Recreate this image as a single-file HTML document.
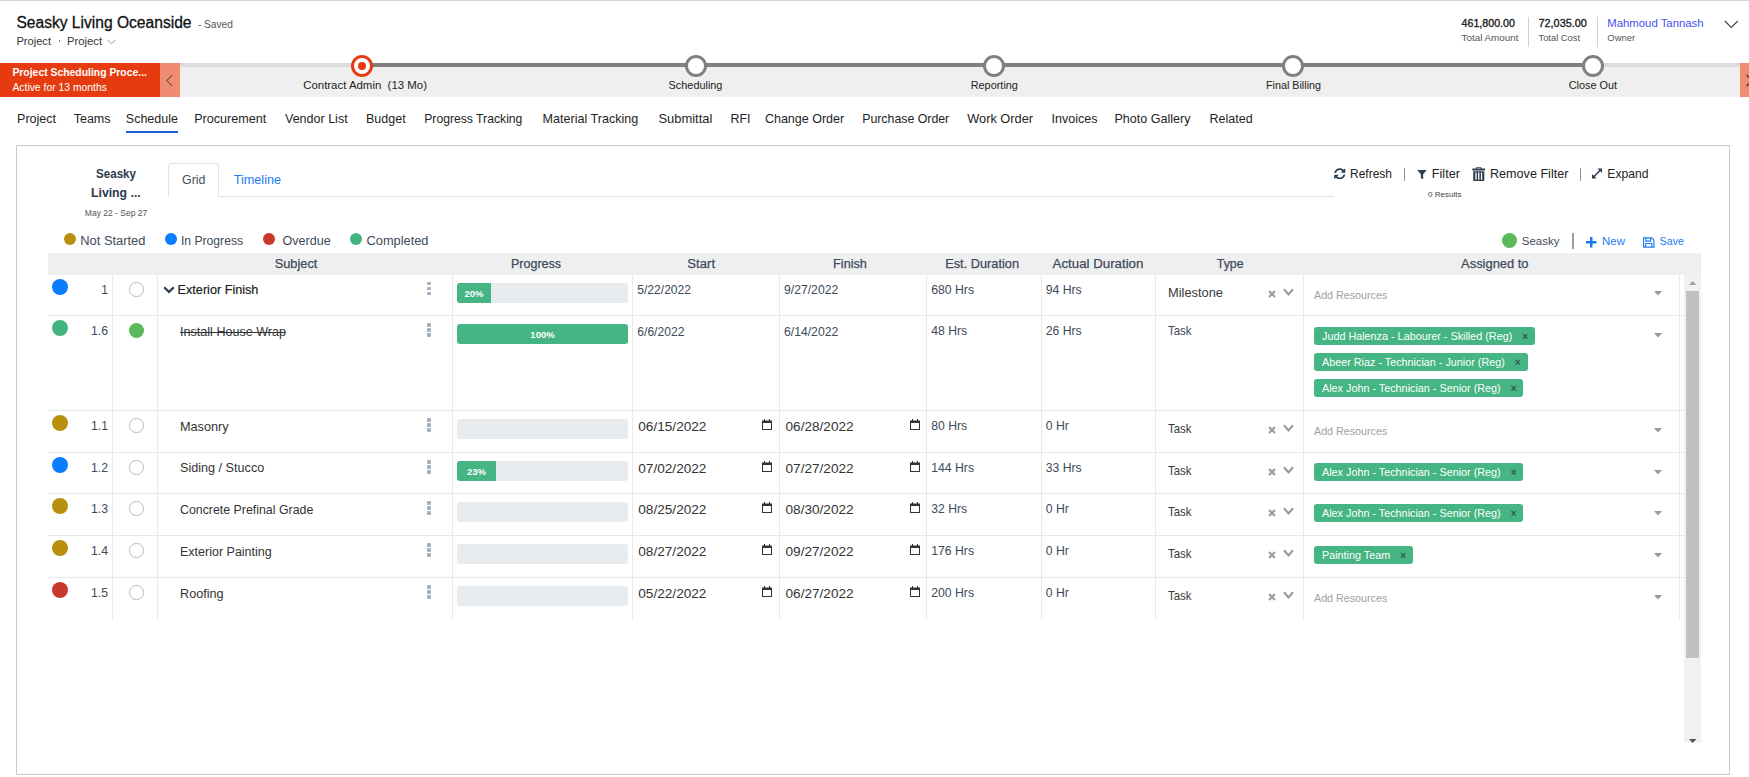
<!DOCTYPE html><html><head><meta charset="utf-8"><style>
*{margin:0;padding:0;box-sizing:content-box}
html,body{width:1749px;height:777px;overflow:hidden;background:#fff;position:relative;font-family:"Liberation Sans",sans-serif}
.t{position:absolute;white-space:nowrap;line-height:1}
.r{position:absolute}
.tag{position:absolute;height:18px;line-height:18px;background:#45b583;color:#fff;font-size:10.8px;padding:0 7px 0 8px;border-radius:3px;white-space:nowrap}
.tag .x{color:#2f5a45;font-size:10px;margin-left:10px;font-weight:700}
</style></head><body><div class="r" style="left:0px;top:0px;width:1749px;height:1px;background:#d6d6d6;"></div>
<div class="t" style="left: 16.4px; top: 15.01px; font-size: 15.6px; color: rgb(17, 17, 17); font-weight: 400; -webkit-text-stroke: 0.3px rgb(17, 17, 17);">Seasky Living Oceanside</div>
<div class="t" style="left: 197.9px; top: 20.01px; font-size: 10.16px; color: rgb(85, 85, 85); font-weight: 400;">- Saved</div>
<div class="t" style="left: 16.4px; top: 36.01px; font-size: 11.12px; color: rgb(51, 51, 51); font-weight: 400;">Project</div>
<div class="r" style="left:58.6px;top:40.3px;width:1.6px;height:1.6px;background:#666;border-radius:50%"></div>
<div class="t" style="left: 67px; top: 36.01px; font-size: 11.25px; color: rgb(51, 51, 51); font-weight: 400;">Project</div>
<svg class="r" style="left:106.5px;top:38.5px" width="9" height="6" viewBox="0 0 9 6"><path d="M0.5 0.8 L4.5 4.8 L8.5 0.8" fill="none" stroke="#888" stroke-width="0.9"></path></svg>
<div class="t" style="left: 1461.6px; top: 17.72px; font-size: 10.67px; color: rgb(34, 34, 34); font-weight: 400; -webkit-text-stroke: 0.35px rgb(34, 34, 34);">461,800.00</div>
<div class="t" style="left: 1461.6px; top: 33.01px; font-size: 9.83px; color: rgb(85, 85, 85); font-weight: 400;">Total Amount</div>
<div class="r" style="left:1528px;top:17px;width:1px;height:30px;background:#d0d0d0;"></div>
<div class="t" style="left: 1538.5px; top: 17.72px; font-size: 10.87px; color: rgb(34, 34, 34); font-weight: 400; -webkit-text-stroke: 0.35px rgb(34, 34, 34);">72,035.00</div>
<div class="t" style="left: 1538.5px; top: 34.01px; font-size: 9.34px; color: rgb(85, 85, 85); font-weight: 400;">Total Cost</div>
<div class="r" style="left:1597px;top:17px;width:1px;height:30px;background:#d0d0d0;"></div>
<div class="t" style="left: 1607.3px; top: 17.9px; font-size: 11.35px; color: rgb(70, 80, 240); font-weight: 400;">Mahmoud Tannash</div>
<div class="t" style="left: 1607.3px; top: 33.01px; font-size: 9.43px; color: rgb(85, 85, 85); font-weight: 400;">Owner</div>
<svg class="r" style="left:1724px;top:19.5px" width="15" height="9" viewBox="0 0 15 9"><path d="M0.8 1 L7.3 7.5 L13.8 1" fill="none" stroke="#444" stroke-width="1.1"></path></svg>
<div class="r" style="left:0px;top:63px;width:1749px;height:34px;background:#efefef;"></div>
<div class="r" style="left:180px;top:63px;width:182px;height:4px;background:#dcdcdc;"></div>
<div class="r" style="left:362px;top:63px;width:1231px;height:4px;background:#808080;"></div>
<div class="r" style="left:1593px;top:63px;width:147px;height:4px;background:#dcdcdc;"></div>
<div class="r" style="left:0px;top:63px;width:160px;height:34px;background:#e63b10;"></div>
<div class="r" style="left:160px;top:63px;width:20px;height:34px;background:#f08c72;"></div>
<div class="r" style="left:1740px;top:63px;width:9px;height:34px;background:#f08c72;"></div>
<svg class="r" style="left:1746px;top:74px" width="3" height="13" viewBox="0 0 3 13"><path d="M0.8 1 L6 6.5 L0.8 12" fill="none" stroke="#333" stroke-width="1.1"></path></svg>
<div class="t" style="left: 12.4px; top: 67.91px; font-size: 10.4px; color: rgb(255, 255, 255); font-weight: 700;">Project Scheduling Proce...</div>
<div class="t" style="left: 12.4px; top: 83.01px; font-size: 10.39px; color: rgb(255, 255, 255); font-weight: 400;">Active for 13 months</div>
<svg class="r" style="left:165px;top:74px" width="9" height="13" viewBox="0 0 9 13"><path d="M7.3 1 L1.8 6.5 L7.3 12" fill="none" stroke="#1f2a44" stroke-width="0.9"></path></svg>
<div class="r" style="left:351px;top:54.5px;width:16px;height:16px;border:3px solid #e63b10;border-radius:50%;background:#fff"></div>
<div class="r" style="left:358px;top:61.5px;width:8px;height:8px;border-radius:50%;background:#e63b10"></div>
<div class="r" style="left:685px;top:54.5px;width:16px;height:16px;border:3px solid #808080;border-radius:50%;background:#fff"></div>
<div class="r" style="left:983px;top:54.5px;width:16px;height:16px;border:3px solid #808080;border-radius:50%;background:#fff"></div>
<div class="r" style="left:1282px;top:54.5px;width:16px;height:16px;border:3px solid #808080;border-radius:50%;background:#fff"></div>
<div class="r" style="left:1582px;top:54.5px;width:16px;height:16px;border:3px solid #808080;border-radius:50%;background:#fff"></div>
<div class="t" style="left: 303.2px; top: 79.81px; font-size: 11.43px; color: rgb(34, 34, 34); font-weight: 400;">Contract Admin &nbsp;(13 Mo)</div>
<div class="t" style="left: 695.5px; transform: translateX(-50%); top: 79.81px; font-size: 10.88px; color: rgb(34, 34, 34); font-weight: 400;">Scheduling</div>
<div class="t" style="left: 994.3px; transform: translateX(-50%); top: 79.81px; font-size: 10.92px; color: rgb(34, 34, 34); font-weight: 400;">Reporting</div>
<div class="t" style="left: 1293.5px; transform: translateX(-50%); top: 79.81px; font-size: 10.76px; color: rgb(34, 34, 34); font-weight: 400;">Final Billing</div>
<div class="t" style="left: 1592.9px; transform: translateX(-50%); top: 79.81px; font-size: 10.85px; color: rgb(34, 34, 34); font-weight: 400;">Close Out</div>
<div class="t" style="left: 17.1px; top: 113.21px; font-size: 12.5px; color: rgb(36, 36, 36); font-weight: 400;">Project</div>
<div class="t" style="left: 73.7px; top: 113.21px; font-size: 12.5px; color: rgb(36, 36, 36); font-weight: 400;">Teams</div>
<div class="t" style="left: 125.8px; top: 113.21px; font-size: 12.5px; color: rgb(36, 36, 36); font-weight: 400;">Schedule</div>
<div class="t" style="left: 194.2px; top: 113.21px; font-size: 12.59px; color: rgb(36, 36, 36); font-weight: 400;">Procurement</div>
<div class="t" style="left: 285px; top: 113.21px; font-size: 12.53px; color: rgb(36, 36, 36); font-weight: 400;">Vendor List</div>
<div class="t" style="left: 366px; top: 113.21px; font-size: 12.5px; color: rgb(36, 36, 36); font-weight: 400;">Budget</div>
<div class="t" style="left: 424.2px; top: 113.21px; font-size: 12.2px; color: rgb(36, 36, 36); font-weight: 400;">Progress Tracking</div>
<div class="t" style="left: 542.6px; top: 113.21px; font-size: 12.58px; color: rgb(36, 36, 36); font-weight: 400;">Material Tracking</div>
<div class="t" style="left: 658.4px; top: 113.21px; font-size: 12.95px; color: rgb(36, 36, 36); font-weight: 400;">Submittal</div>
<div class="t" style="left: 730.4px; top: 113.21px; font-size: 12.5px; color: rgb(36, 36, 36); font-weight: 400;">RFI</div>
<div class="t" style="left: 764.9px; top: 113.21px; font-size: 12.52px; color: rgb(36, 36, 36); font-weight: 400;">Change Order</div>
<div class="t" style="left: 862.2px; top: 113.21px; font-size: 12.33px; color: rgb(36, 36, 36); font-weight: 400;">Purchase Order</div>
<div class="t" style="left: 967.2px; top: 113.21px; font-size: 12.79px; color: rgb(36, 36, 36); font-weight: 400;">Work Order</div>
<div class="t" style="left: 1051.6px; top: 113.21px; font-size: 12.5px; color: rgb(36, 36, 36); font-weight: 400;">Invoices</div>
<div class="t" style="left: 1114.4px; top: 113.21px; font-size: 12.57px; color: rgb(36, 36, 36); font-weight: 400;">Photo Gallery</div>
<div class="t" style="left: 1209.6px; top: 113.21px; font-size: 12.5px; color: rgb(36, 36, 36); font-weight: 400;">Related</div>
<div class="r" style="left:126px;top:131px;width:52px;height:2px;background:#1a5fd6;"></div>
<div class="r" style="left:16px;top:145px;width:1712px;height:628px;border:1px solid #c8c8c8"></div>
<div class="t" style="left: 96px; top: 167px; font-size: 13.2px; color: rgb(44, 58, 75); font-weight: 700; transform: scaleX(0.8797); transform-origin: left center;">Seasky</div>
<div class="t" style="left: 91.2px; top: 186px; font-size: 13.2px; color: rgb(44, 58, 75); font-weight: 700; transform: scaleX(0.9292); transform-origin: left center;">Living ...</div>
<div class="t" style="left: 84.8px; top: 208.61px; font-size: 8.52px; color: rgb(85, 85, 85); font-weight: 400;">May 22 - Sep 27</div>
<div class="r" style="left:219px;top:196px;width:1115px;height:1px;background:#dee2e6;"></div>
<div class="r" style="left:168px;top:163px;width:49px;height:33px;border:1px solid #dee2e6;border-bottom:none;border-radius:4px 4px 0 0;background:#fff"></div>
<div class="t" style="left: 182px; top: 174.41px; font-size: 12.4px; color: rgb(73, 80, 87); font-weight: 400;">Grid</div>
<div class="t" style="left: 233.7px; top: 174.41px; font-size: 12.66px; color: rgb(26, 124, 240); font-weight: 400;">Timeline</div>
<svg class="r" style="left:1334px;top:167.5px" width="11.5" height="11.5" viewBox="0 0 512 512"><path fill="#2c3e50" d="M370.7 133.3C339.5 104 298.9 88 255.8 88c-77.5.1-144.3 53.2-162.8 126.9-1.3 5.4-6.1 9.2-11.7 9.2H24.1c-7.5 0-13.2-6.8-11.8-14.2C33.9 94.9 134.8 8 256 8c66.4 0 126.8 26.1 171.3 68.7L463 41c15.1-15.1 41-4.4 41 17v134c0 13.3-10.7 24-24 24H346c-21.4 0-32.1-25.9-17-41zM32 296h134c21.4 0 32.1 25.9 17 41l-41.8 41.8c31.3 29.3 71.8 45.3 114.9 45.2 77.4-.1 144.3-53.1 162.8-126.8 1.3-5.4 6.1-9.2 11.7-9.2h57.3c7.5 0 13.2 6.8 11.8 14.2C478.1 417.1 377.2 504 256 504c-66.4 0-126.8-26.1-171.3-68.7L49 471c-15.1 15.1-41 4.4-41-17V320c0-13.3 10.7-24 24-24z"></path></svg>
<div class="t" style="left: 1350px; top: 168.01px; font-size: 11.99px; color: rgb(34, 34, 34); font-weight: 400;">Refresh</div>
<div class="r" style="left:1403.5px;top:168px;width:1.3px;height:13px;background:#8a939c;"></div>
<svg class="r" style="left:1417px;top:169.5px" width="10" height="9.5" viewBox="0 0 10 10"><path fill="#2c3e50" d="M0 0 H10 L6.2 4.5 V10 L3.8 8.5 V4.5 Z"></path></svg>
<div class="t" style="left: 1431.8px; top: 168px; font-size: 12.69px; color: rgb(34, 34, 34); font-weight: 400;">Filter</div>
<svg class="r" style="left:1471.7px;top:166.8px" width="13.5" height="14.2" viewBox="0 0 13.5 14.2"><path fill="#2c3e50" d="M4.3 0.3 H9.2 L9.8 1.6 H13.2 V3.4 H0.3 V1.6 H3.7 Z M1.2 4.2 H12.3 V13 Q12.3 14.2 11.1 14.2 H2.4 Q1.2 14.2 1.2 13 Z"></path><path fill="#fff" d="M5.2 1 H8.3 L8.6 1.6 H4.9Z M3.3 5.6 H4.6 V12.8 H3.3Z M6.1 5.6 H7.4 V12.8 H6.1Z M8.9 5.6 H10.2 V12.8 H8.9Z"></path></svg>
<div class="t" style="left: 1490px; top: 168px; font-size: 12.6px; color: rgb(34, 34, 34); font-weight: 400;">Remove Filter</div>
<div class="r" style="left:1579.5px;top:168px;width:1.3px;height:13px;background:#8a939c;"></div>
<svg class="r" style="left:1591px;top:167.5px" width="12" height="11" viewBox="0 0 12 12"><path fill="none" stroke="#2c3e50" stroke-width="1.6" d="M2.5 9.5 L9.5 2.5"></path><path fill="#2c3e50" d="M6.5 0.5 H11.5 V5.5 Z M0.5 6.5 V11.5 H5.5 Z"></path></svg>
<div class="t" style="left: 1607.3px; top: 168px; font-size: 12.15px; color: rgb(34, 34, 34); font-weight: 400;">Expand</div>
<div class="t" style="left: 1428px; top: 190.8px; font-size: 8.06px; color: rgb(68, 68, 68); font-weight: 400;">0 Results</div>
<div class="r" style="left:63.5px;top:233px;width:12px;height:12px;background:#b8900e;border-radius:50%"></div>
<div class="t" style="left: 80.3px; top: 234.91px; font-size: 12.89px; color: rgb(61, 74, 90); font-weight: 400;">Not Started</div>
<div class="r" style="left:164.6px;top:233px;width:12px;height:12px;background:#0a7cff;border-radius:50%"></div>
<div class="t" style="left: 180.9px; top: 234.91px; font-size: 12.17px; color: rgb(61, 74, 90); font-weight: 400;">In Progress</div>
<div class="r" style="left:263.1px;top:233px;width:12px;height:12px;background:#c9392b;border-radius:50%"></div>
<div class="t" style="left: 282.5px; top: 234.91px; font-size: 12.55px; color: rgb(61, 74, 90); font-weight: 400;">Overdue</div>
<div class="r" style="left:349.8px;top:233px;width:12px;height:12px;background:#43b47f;border-radius:50%"></div>
<div class="t" style="left: 366.6px; top: 234.91px; font-size: 12.8px; color: rgb(61, 74, 90); font-weight: 400;">Completed</div>
<div class="r" style="left:1502px;top:233px;width:15px;height:15px;background:#5cb85c;border-radius:50%"></div>
<div class="t" style="left: 1521.8px; top: 235.6px; font-size: 11.46px; color: rgb(61, 74, 90); font-weight: 400;">Seasky</div>
<div class="r" style="left:1572px;top:233px;width:2px;height:16px;background:#9aa0a6;"></div>
<svg class="r" style="left:1586px;top:237px" width="10.5" height="10.5" viewBox="0 0 11 11"><path fill="#1a7cf0" d="M4.2 0 H6.8 V4.2 H11 V6.8 H6.8 V11 H4.2 V6.8 H0 V4.2 H4.2 Z"></path></svg>
<div class="t" style="left: 1602px; top: 235.6px; font-size: 11.49px; color: rgb(26, 124, 240); font-weight: 400;">New</div>
<svg class="r" style="left:1643px;top:237px" width="11.5" height="11" viewBox="0 0 12 11"><path fill="none" stroke="#1a7cf0" stroke-width="1.2" d="M0.6 0.6 H9 L11.4 3 V10.4 H0.6 Z M3 0.6 V4 H8 V0.6 M2.8 10.4 V6.5 H9.2 V10.4"></path></svg>
<div class="t" style="left: 1659.6px; top: 235.6px; font-size: 10.67px; color: rgb(26, 124, 240); font-weight: 400;">Save</div>
<div class="r" style="left:48px;top:253px;width:1653px;height:22px;background:#efefef;"></div>
<div class="t" style="left: 296px; transform: translateX(-50%); top: 258.41px; font-size: 12.81px; color: rgb(61, 74, 90); font-weight: 400; -webkit-text-stroke: 0.25px rgb(61, 74, 90);">Subject</div>
<div class="t" style="left: 536px; transform: translateX(-50%); top: 258.41px; font-size: 12.49px; color: rgb(61, 74, 90); font-weight: 400; -webkit-text-stroke: 0.25px rgb(61, 74, 90);">Progress</div>
<div class="t" style="left: 701.2px; transform: translateX(-50%); top: 257.41px; font-size: 13.12px; color: rgb(61, 74, 90); font-weight: 400; -webkit-text-stroke: 0.25px rgb(61, 74, 90);">Start</div>
<div class="t" style="left: 850px; transform: translateX(-50%); top: 258.41px; font-size: 12.68px; color: rgb(61, 74, 90); font-weight: 400; -webkit-text-stroke: 0.25px rgb(61, 74, 90);">Finish</div>
<div class="t" style="left: 982.1px; transform: translateX(-50%); top: 258.41px; font-size: 12.77px; color: rgb(61, 74, 90); font-weight: 400; -webkit-text-stroke: 0.25px rgb(61, 74, 90);">Est. Duration</div>
<div class="t" style="left: 1098px; transform: translateX(-50%); top: 257.41px; font-size: 13.29px; color: rgb(61, 74, 90); font-weight: 400; -webkit-text-stroke: 0.25px rgb(61, 74, 90);">Actual Duration</div>
<div class="t" style="left: 1230.2px; transform: translateX(-50%); top: 258.41px; font-size: 12.31px; color: rgb(61, 74, 90); font-weight: 400; -webkit-text-stroke: 0.25px rgb(61, 74, 90);">Type</div>
<div class="t" style="left: 1494.8px; transform: translateX(-50%); top: 258.41px; font-size: 12.92px; color: rgb(61, 74, 90); font-weight: 400; -webkit-text-stroke: 0.25px rgb(61, 74, 90);">Assigned to</div>
<div class="r" style="left:48px;top:315px;width:1636px;height:1px;background:#e9e9e9;"></div>
<div class="r" style="left:48px;top:410px;width:1636px;height:1px;background:#e9e9e9;"></div>
<div class="r" style="left:48px;top:452px;width:1636px;height:1px;background:#e9e9e9;"></div>
<div class="r" style="left:48px;top:493px;width:1636px;height:1px;background:#e9e9e9;"></div>
<div class="r" style="left:48px;top:535px;width:1636px;height:1px;background:#e9e9e9;"></div>
<div class="r" style="left:48px;top:577px;width:1636px;height:1px;background:#e9e9e9;"></div>
<div class="r" style="left:112px;top:275px;width:1px;height:344px;background:#e9e9e9;"></div>
<div class="r" style="left:157px;top:275px;width:1px;height:344px;background:#e9e9e9;"></div>
<div class="r" style="left:452px;top:275px;width:1px;height:344px;background:#e9e9e9;"></div>
<div class="r" style="left:632px;top:275px;width:1px;height:344px;background:#e9e9e9;"></div>
<div class="r" style="left:779px;top:275px;width:1px;height:344px;background:#e9e9e9;"></div>
<div class="r" style="left:926px;top:275px;width:1px;height:344px;background:#e9e9e9;"></div>
<div class="r" style="left:1041px;top:275px;width:1px;height:344px;background:#e9e9e9;"></div>
<div class="r" style="left:1155px;top:275px;width:1px;height:344px;background:#e9e9e9;"></div>
<div class="r" style="left:1303px;top:275px;width:1px;height:344px;background:#e9e9e9;"></div>
<div class="r" style="left:1679px;top:275px;width:1px;height:344px;background:#e9e9e9;"></div>
<div class="r" style="left:1684px;top:275px;width:17px;height:468px;background:#f1f1f1;"></div>
<div class="r" style="left:1686px;top:291px;width:13px;height:367px;background:#c1c1c1;"></div>
<svg class="r" style="left:1688.8px;top:281px" width="7.2" height="4" viewBox="0 0 7.2 4"><path fill="#a3a3a3" d="M0 4 L3.6 0 L7.2 4Z"></path></svg>
<svg class="r" style="left:1688.8px;top:738.5px" width="7.2" height="4" viewBox="0 0 7.2 4"><path fill="#505050" d="M0 0 L3.6 4 L7.2 0Z"></path></svg>
<div class="r" style="left:52px;top:279px;width:16px;height:16px;background:#0a7cff;border-radius:50%"></div>
<div class="t" style="right: 1641px; top: 284.01px; font-size: 12.2px; color: rgb(61, 74, 90); font-weight: 400;">1</div>
<div class="r" style="left:129.3px;top:282px;width:12.5px;height:12.5px;border:1px solid #b4bcc4;border-radius:50%"></div>
<svg class="r" style="left:163px;top:286px" width="12" height="8" viewBox="0 0 12 8"><path d="M1.2 1.2 L6 6 L10.8 1.2" fill="none" stroke="#2c3a4b" stroke-width="2.2"></path></svg>
<div class="t" style="left: 177.6px; top: 284px; font-size: 12.65px; color: rgb(34, 34, 34); font-weight: 400; -webkit-text-stroke: 0.2px rgb(34, 34, 34);">Exterior Finish</div>
<div class="r" style="left:427.3px;top:281.5px;width:3.8px;height:3.5px;background:#a3b0bd;border-radius:1px"></div>
<div class="r" style="left:427.3px;top:286.5px;width:3.8px;height:3.5px;background:#a3b0bd;border-radius:1px"></div>
<div class="r" style="left:427.3px;top:291.5px;width:3.8px;height:3.5px;background:#a3b0bd;border-radius:1px"></div>
<div class="r" style="left:457px;top:283px;width:171px;height:20px;background:#e9ecef;border-radius:3px"></div>
<div class="r" style="left:457px;top:283px;width:34px;height:20px;background:#45b583;border-radius:3px 0 0 3px;color:#fff;font-weight:700;font-size:9.5px;line-height:21px;text-align:center;font-family:'Liberation Sans',sans-serif">20%</div>
<div class="t" style="left: 637.3px; top: 284px; font-size: 12.07px; color: rgb(61, 74, 90); font-weight: 400;">5/22/2022</div>
<div class="t" style="left: 784px; top: 284px; font-size: 12.19px; color: rgb(61, 74, 90); font-weight: 400;">9/27/2022</div>
<div class="t" style="left: 931.3px; top: 284.01px; font-size: 12.2px; color: rgb(61, 74, 90); font-weight: 400;">680 Hrs</div>
<div class="t" style="left: 1045.8px; top: 284.01px; font-size: 12.2px; color: rgb(61, 74, 90); font-weight: 400;">94 Hrs</div>
<div class="t" style="left: 1168px; top: 287px; font-size: 12.4px; color: rgb(58, 58, 58); font-weight: 400; transform: scaleX(1.0352); transform-origin: left center;">Milestone</div>
<svg class="r" style="left:1268px;top:290px" width="8" height="8" viewBox="0 0 8 8"><path d="M1 1 L7 7 M7 1 L1 7" stroke="#999" stroke-width="2"></path></svg>
<svg class="r" style="left:1283px;top:287.5px" width="11" height="9" viewBox="0 0 11 9"><path d="M1 1.2 L5.5 6.5 L10 1.2" fill="none" stroke="#999" stroke-width="2.1"></path></svg>
<div class="t" style="left: 1314px; top: 290.31px; font-size: 10.72px; color: rgb(160, 160, 160); font-weight: 400;">Add Resources</div>
<svg class="r" style="left:1654px;top:291px" width="8" height="4.5" viewBox="0 0 8 4.5"><path fill="#999" d="M0 0 L8 0 L4 4.5Z"></path></svg>
<div class="r" style="left:52px;top:320px;width:16px;height:16px;background:#43b47f;border-radius:50%"></div>
<div class="t" style="right: 1641px; top: 325.01px; font-size: 12.2px; color: rgb(61, 74, 90); font-weight: 400;">1.6</div>
<div class="r" style="left:128.8px;top:323px;width:15px;height:15px;background:#5cb85c;border-radius:50%"></div>
<div class="t" style="left: 180.1px; top: 326px; font-size: 12.57px; color: rgb(51, 51, 51); font-weight: 400; text-decoration: line-through;">Install House Wrap</div>
<div class="r" style="left:427.3px;top:323.3px;width:3.8px;height:3.5px;background:#a3b0bd;border-radius:1px"></div>
<div class="r" style="left:427.3px;top:328.3px;width:3.8px;height:3.5px;background:#a3b0bd;border-radius:1px"></div>
<div class="r" style="left:427.3px;top:333.3px;width:3.8px;height:3.5px;background:#a3b0bd;border-radius:1px"></div>
<div class="r" style="left:457px;top:324px;width:171px;height:20px;background:#e9ecef;border-radius:3px"></div>
<div class="r" style="left:457px;top:324px;width:171px;height:20px;background:#45b583;border-radius:3px;color:#fff;font-weight:700;font-size:9.5px;line-height:21px;text-align:center;font-family:'Liberation Sans',sans-serif">100%</div>
<div class="t" style="left: 637.3px; top: 326px; font-size: 12.1px; color: rgb(61, 74, 90); font-weight: 400;">6/6/2022</div>
<div class="t" style="left: 784px; top: 326px; font-size: 12.19px; color: rgb(61, 74, 90); font-weight: 400;">6/14/2022</div>
<div class="t" style="left: 931.3px; top: 325.01px; font-size: 12.2px; color: rgb(61, 74, 90); font-weight: 400;">48 Hrs</div>
<div class="t" style="left: 1045.8px; top: 325.01px; font-size: 12.2px; color: rgb(61, 74, 90); font-weight: 400;">26 Hrs</div>
<div class="t" style="left: 1168px; top: 325px; font-size: 12.4px; color: rgb(61, 74, 90); font-weight: 400; transform: scaleX(0.9221); transform-origin: left center;">Task</div>
<div class="tag" style="left:1314px;top:327.0px">Judd Halenza - Labourer - Skilled (Reg)<span class="x">×</span></div>
<div class="tag" style="left:1314px;top:353.1px">Abeer Riaz - Technician - Junior (Reg)<span class="x">×</span></div>
<div class="tag" style="left:1314px;top:379.2px">Alex John - Technician - Senior (Reg)<span class="x">×</span></div>
<svg class="r" style="left:1654px;top:333px" width="8" height="4.5" viewBox="0 0 8 4.5"><path fill="#999" d="M0 0 L8 0 L4 4.5Z"></path></svg>
<div class="r" style="left:52px;top:415px;width:16px;height:16px;background:#b8900e;border-radius:50%"></div>
<div class="t" style="right: 1641px; top: 420.01px; font-size: 12.2px; color: rgb(61, 74, 90); font-weight: 400;">1.1</div>
<div class="r" style="left:129.3px;top:418px;width:12.5px;height:12.5px;border:1px solid #b4bcc4;border-radius:50%"></div>
<div class="t" style="left: 180px; top: 421px; font-size: 12.69px; color: rgb(51, 51, 51); font-weight: 400;">Masonry</div>
<div class="r" style="left:427.3px;top:418.3px;width:3.8px;height:3.5px;background:#a3b0bd;border-radius:1px"></div>
<div class="r" style="left:427.3px;top:423.3px;width:3.8px;height:3.5px;background:#a3b0bd;border-radius:1px"></div>
<div class="r" style="left:427.3px;top:428.3px;width:3.8px;height:3.5px;background:#a3b0bd;border-radius:1px"></div>
<div class="r" style="left:457px;top:419px;width:171px;height:20px;background:#e9ecef;border-radius:3px"></div>
<div class="t" style="left: 638.3px; top: 420.01px; font-size: 13.61px; color: rgb(51, 51, 51); font-weight: 400;">06/15/2022</div>
<div class="t" style="left: 785.5px; top: 420.01px; font-size: 13.61px; color: rgb(51, 51, 51); font-weight: 400;">06/28/2022</div>
<svg class="r" style="left:762px;top:419px" width="10" height="11" viewBox="0 0 10 11"><path fill="#333" d="M2 0 H3 V1.5 H7 V0 H8 V1.5 H10 V11 H0 V1.5 H2 Z M1 4 V10 H9 V4 Z"></path></svg>
<svg class="r" style="left:909.5px;top:419px" width="10" height="11" viewBox="0 0 10 11"><path fill="#333" d="M2 0 H3 V1.5 H7 V0 H8 V1.5 H10 V11 H0 V1.5 H2 Z M1 4 V10 H9 V4 Z"></path></svg>
<div class="t" style="left: 931.3px; top: 420.01px; font-size: 12.2px; color: rgb(61, 74, 90); font-weight: 400;">80 Hrs</div>
<div class="t" style="left: 1045.8px; top: 420.01px; font-size: 12.2px; color: rgb(61, 74, 90); font-weight: 400;">0 Hr</div>
<div class="t" style="left: 1168px; top: 423px; font-size: 12.4px; color: rgb(58, 58, 58); font-weight: 400; transform: scaleX(0.9221); transform-origin: left center;">Task</div>
<svg class="r" style="left:1268px;top:426px" width="8" height="8" viewBox="0 0 8 8"><path d="M1 1 L7 7 M7 1 L1 7" stroke="#999" stroke-width="2"></path></svg>
<svg class="r" style="left:1283px;top:423.5px" width="11" height="9" viewBox="0 0 11 9"><path d="M1 1.2 L5.5 6.5 L10 1.2" fill="none" stroke="#999" stroke-width="2.1"></path></svg>
<div class="t" style="left: 1314px; top: 426.31px; font-size: 10.72px; color: rgb(160, 160, 160); font-weight: 400;">Add Resources</div>
<svg class="r" style="left:1654px;top:427.6px" width="8" height="4.5" viewBox="0 0 8 4.5"><path fill="#999" d="M0 0 L8 0 L4 4.5Z"></path></svg>
<div class="r" style="left:52px;top:457px;width:16px;height:16px;background:#0a7cff;border-radius:50%"></div>
<div class="t" style="right: 1641px; top: 462.01px; font-size: 12.2px; color: rgb(61, 74, 90); font-weight: 400;">1.2</div>
<div class="r" style="left:129.3px;top:460px;width:12.5px;height:12.5px;border:1px solid #b4bcc4;border-radius:50%"></div>
<div class="t" style="left: 180px; top: 462px; font-size: 12.63px; color: rgb(51, 51, 51); font-weight: 400;">Siding / Stucco</div>
<div class="r" style="left:427.3px;top:460.3px;width:3.8px;height:3.5px;background:#a3b0bd;border-radius:1px"></div>
<div class="r" style="left:427.3px;top:465.3px;width:3.8px;height:3.5px;background:#a3b0bd;border-radius:1px"></div>
<div class="r" style="left:427.3px;top:470.3px;width:3.8px;height:3.5px;background:#a3b0bd;border-radius:1px"></div>
<div class="r" style="left:457px;top:461px;width:171px;height:20px;background:#e9ecef;border-radius:3px"></div>
<div class="r" style="left:457px;top:461px;width:39px;height:20px;background:#45b583;border-radius:3px 0 0 3px;color:#fff;font-weight:700;font-size:9.5px;line-height:21px;text-align:center;font-family:'Liberation Sans',sans-serif">23%</div>
<div class="t" style="left: 638.3px; top: 462.01px; font-size: 13.61px; color: rgb(51, 51, 51); font-weight: 400;">07/02/2022</div>
<div class="t" style="left: 785.5px; top: 462.01px; font-size: 13.61px; color: rgb(51, 51, 51); font-weight: 400;">07/27/2022</div>
<svg class="r" style="left:762px;top:461px" width="10" height="11" viewBox="0 0 10 11"><path fill="#333" d="M2 0 H3 V1.5 H7 V0 H8 V1.5 H10 V11 H0 V1.5 H2 Z M1 4 V10 H9 V4 Z"></path></svg>
<svg class="r" style="left:909.5px;top:461px" width="10" height="11" viewBox="0 0 10 11"><path fill="#333" d="M2 0 H3 V1.5 H7 V0 H8 V1.5 H10 V11 H0 V1.5 H2 Z M1 4 V10 H9 V4 Z"></path></svg>
<div class="t" style="left: 931.3px; top: 462.01px; font-size: 12.2px; color: rgb(61, 74, 90); font-weight: 400;">144 Hrs</div>
<div class="t" style="left: 1045.8px; top: 462.01px; font-size: 12.2px; color: rgb(61, 74, 90); font-weight: 400;">33 Hrs</div>
<div class="t" style="left: 1168px; top: 465px; font-size: 12.4px; color: rgb(58, 58, 58); font-weight: 400; transform: scaleX(0.9221); transform-origin: left center;">Task</div>
<svg class="r" style="left:1268px;top:468px" width="8" height="8" viewBox="0 0 8 8"><path d="M1 1 L7 7 M7 1 L1 7" stroke="#999" stroke-width="2"></path></svg>
<svg class="r" style="left:1283px;top:465.5px" width="11" height="9" viewBox="0 0 11 9"><path d="M1 1.2 L5.5 6.5 L10 1.2" fill="none" stroke="#999" stroke-width="2.1"></path></svg>
<div class="tag" style="left:1314px;top:463px">Alex John - Technician - Senior (Reg)<span class="x">×</span></div>
<svg class="r" style="left:1654px;top:469.6px" width="8" height="4.5" viewBox="0 0 8 4.5"><path fill="#999" d="M0 0 L8 0 L4 4.5Z"></path></svg>
<div class="r" style="left:52px;top:498px;width:16px;height:16px;background:#b8900e;border-radius:50%"></div>
<div class="t" style="right: 1641px; top: 503.01px; font-size: 12.2px; color: rgb(61, 74, 90); font-weight: 400;">1.3</div>
<div class="r" style="left:129.3px;top:501px;width:12.5px;height:12.5px;border:1px solid #b4bcc4;border-radius:50%"></div>
<div class="t" style="left: 180px; top: 504px; font-size: 12.36px; color: rgb(51, 51, 51); font-weight: 400;">Concrete Prefinal Grade</div>
<div class="r" style="left:427.3px;top:501.3px;width:3.8px;height:3.5px;background:#a3b0bd;border-radius:1px"></div>
<div class="r" style="left:427.3px;top:506.3px;width:3.8px;height:3.5px;background:#a3b0bd;border-radius:1px"></div>
<div class="r" style="left:427.3px;top:511.3px;width:3.8px;height:3.5px;background:#a3b0bd;border-radius:1px"></div>
<div class="r" style="left:457px;top:502px;width:171px;height:20px;background:#e9ecef;border-radius:3px"></div>
<div class="t" style="left: 638.3px; top: 503.01px; font-size: 13.61px; color: rgb(51, 51, 51); font-weight: 400;">08/25/2022</div>
<div class="t" style="left: 785.5px; top: 503.01px; font-size: 13.61px; color: rgb(51, 51, 51); font-weight: 400;">08/30/2022</div>
<svg class="r" style="left:762px;top:502px" width="10" height="11" viewBox="0 0 10 11"><path fill="#333" d="M2 0 H3 V1.5 H7 V0 H8 V1.5 H10 V11 H0 V1.5 H2 Z M1 4 V10 H9 V4 Z"></path></svg>
<svg class="r" style="left:909.5px;top:502px" width="10" height="11" viewBox="0 0 10 11"><path fill="#333" d="M2 0 H3 V1.5 H7 V0 H8 V1.5 H10 V11 H0 V1.5 H2 Z M1 4 V10 H9 V4 Z"></path></svg>
<div class="t" style="left: 931.3px; top: 503.01px; font-size: 12.2px; color: rgb(61, 74, 90); font-weight: 400;">32 Hrs</div>
<div class="t" style="left: 1045.8px; top: 503.01px; font-size: 12.2px; color: rgb(61, 74, 90); font-weight: 400;">0 Hr</div>
<div class="t" style="left: 1168px; top: 506px; font-size: 12.4px; color: rgb(58, 58, 58); font-weight: 400; transform: scaleX(0.9221); transform-origin: left center;">Task</div>
<svg class="r" style="left:1268px;top:509px" width="8" height="8" viewBox="0 0 8 8"><path d="M1 1 L7 7 M7 1 L1 7" stroke="#999" stroke-width="2"></path></svg>
<svg class="r" style="left:1283px;top:506.5px" width="11" height="9" viewBox="0 0 11 9"><path d="M1 1.2 L5.5 6.5 L10 1.2" fill="none" stroke="#999" stroke-width="2.1"></path></svg>
<div class="tag" style="left:1314px;top:504px">Alex John - Technician - Senior (Reg)<span class="x">×</span></div>
<svg class="r" style="left:1654px;top:510.6px" width="8" height="4.5" viewBox="0 0 8 4.5"><path fill="#999" d="M0 0 L8 0 L4 4.5Z"></path></svg>
<div class="r" style="left:52px;top:540px;width:16px;height:16px;background:#b8900e;border-radius:50%"></div>
<div class="t" style="right: 1641px; top: 545.01px; font-size: 12.2px; color: rgb(61, 74, 90); font-weight: 400;">1.4</div>
<div class="r" style="left:129.3px;top:543px;width:12.5px;height:12.5px;border:1px solid #b4bcc4;border-radius:50%"></div>
<div class="t" style="left: 180px; top: 546px; font-size: 12.5px; color: rgb(51, 51, 51); font-weight: 400;">Exterior Painting</div>
<div class="r" style="left:427.3px;top:543.3px;width:3.8px;height:3.5px;background:#a3b0bd;border-radius:1px"></div>
<div class="r" style="left:427.3px;top:548.3px;width:3.8px;height:3.5px;background:#a3b0bd;border-radius:1px"></div>
<div class="r" style="left:427.3px;top:553.3px;width:3.8px;height:3.5px;background:#a3b0bd;border-radius:1px"></div>
<div class="r" style="left:457px;top:544px;width:171px;height:20px;background:#e9ecef;border-radius:3px"></div>
<div class="t" style="left: 638.3px; top: 545.01px; font-size: 13.61px; color: rgb(51, 51, 51); font-weight: 400;">08/27/2022</div>
<div class="t" style="left: 785.5px; top: 545.01px; font-size: 13.61px; color: rgb(51, 51, 51); font-weight: 400;">09/27/2022</div>
<svg class="r" style="left:762px;top:544px" width="10" height="11" viewBox="0 0 10 11"><path fill="#333" d="M2 0 H3 V1.5 H7 V0 H8 V1.5 H10 V11 H0 V1.5 H2 Z M1 4 V10 H9 V4 Z"></path></svg>
<svg class="r" style="left:909.5px;top:544px" width="10" height="11" viewBox="0 0 10 11"><path fill="#333" d="M2 0 H3 V1.5 H7 V0 H8 V1.5 H10 V11 H0 V1.5 H2 Z M1 4 V10 H9 V4 Z"></path></svg>
<div class="t" style="left: 931.3px; top: 545.01px; font-size: 12.2px; color: rgb(61, 74, 90); font-weight: 400;">176 Hrs</div>
<div class="t" style="left: 1045.8px; top: 545.01px; font-size: 12.2px; color: rgb(61, 74, 90); font-weight: 400;">0 Hr</div>
<div class="t" style="left: 1168px; top: 548px; font-size: 12.4px; color: rgb(58, 58, 58); font-weight: 400; transform: scaleX(0.9221); transform-origin: left center;">Task</div>
<svg class="r" style="left:1268px;top:551px" width="8" height="8" viewBox="0 0 8 8"><path d="M1 1 L7 7 M7 1 L1 7" stroke="#999" stroke-width="2"></path></svg>
<svg class="r" style="left:1283px;top:548.5px" width="11" height="9" viewBox="0 0 11 9"><path d="M1 1.2 L5.5 6.5 L10 1.2" fill="none" stroke="#999" stroke-width="2.1"></path></svg>
<div class="tag" style="left:1314px;top:546px">Painting Team<span class="x">×</span></div>
<svg class="r" style="left:1654px;top:552.6px" width="8" height="4.5" viewBox="0 0 8 4.5"><path fill="#999" d="M0 0 L8 0 L4 4.5Z"></path></svg>
<div class="r" style="left:52px;top:582px;width:16px;height:16px;background:#c9392b;border-radius:50%"></div>
<div class="t" style="right: 1641px; top: 587.01px; font-size: 12.2px; color: rgb(61, 74, 90); font-weight: 400;">1.5</div>
<div class="r" style="left:129.3px;top:585px;width:12.5px;height:12.5px;border:1px solid #b4bcc4;border-radius:50%"></div>
<div class="t" style="left: 180px; top: 588px; font-size: 12.66px; color: rgb(51, 51, 51); font-weight: 400;">Roofing</div>
<div class="r" style="left:427.3px;top:585.3px;width:3.8px;height:3.5px;background:#a3b0bd;border-radius:1px"></div>
<div class="r" style="left:427.3px;top:590.3px;width:3.8px;height:3.5px;background:#a3b0bd;border-radius:1px"></div>
<div class="r" style="left:427.3px;top:595.3px;width:3.8px;height:3.5px;background:#a3b0bd;border-radius:1px"></div>
<div class="r" style="left:457px;top:586px;width:171px;height:20px;background:#e9ecef;border-radius:3px"></div>
<div class="t" style="left: 638.3px; top: 587.01px; font-size: 13.61px; color: rgb(51, 51, 51); font-weight: 400;">05/22/2022</div>
<div class="t" style="left: 785.5px; top: 587.01px; font-size: 13.61px; color: rgb(51, 51, 51); font-weight: 400;">06/27/2022</div>
<svg class="r" style="left:762px;top:586px" width="10" height="11" viewBox="0 0 10 11"><path fill="#333" d="M2 0 H3 V1.5 H7 V0 H8 V1.5 H10 V11 H0 V1.5 H2 Z M1 4 V10 H9 V4 Z"></path></svg>
<svg class="r" style="left:909.5px;top:586px" width="10" height="11" viewBox="0 0 10 11"><path fill="#333" d="M2 0 H3 V1.5 H7 V0 H8 V1.5 H10 V11 H0 V1.5 H2 Z M1 4 V10 H9 V4 Z"></path></svg>
<div class="t" style="left: 931.3px; top: 587.01px; font-size: 12.2px; color: rgb(61, 74, 90); font-weight: 400;">200 Hrs</div>
<div class="t" style="left: 1045.8px; top: 587.01px; font-size: 12.2px; color: rgb(61, 74, 90); font-weight: 400;">0 Hr</div>
<div class="t" style="left: 1168px; top: 590px; font-size: 12.4px; color: rgb(58, 58, 58); font-weight: 400; transform: scaleX(0.9221); transform-origin: left center;">Task</div>
<svg class="r" style="left:1268px;top:593px" width="8" height="8" viewBox="0 0 8 8"><path d="M1 1 L7 7 M7 1 L1 7" stroke="#999" stroke-width="2"></path></svg>
<svg class="r" style="left:1283px;top:590.5px" width="11" height="9" viewBox="0 0 11 9"><path d="M1 1.2 L5.5 6.5 L10 1.2" fill="none" stroke="#999" stroke-width="2.1"></path></svg>
<div class="t" style="left: 1314px; top: 593.31px; font-size: 10.72px; color: rgb(160, 160, 160); font-weight: 400;">Add Resources</div>
<svg class="r" style="left:1654px;top:594.6px" width="8" height="4.5" viewBox="0 0 8 4.5"><path fill="#999" d="M0 0 L8 0 L4 4.5Z"></path></svg></body></html>
